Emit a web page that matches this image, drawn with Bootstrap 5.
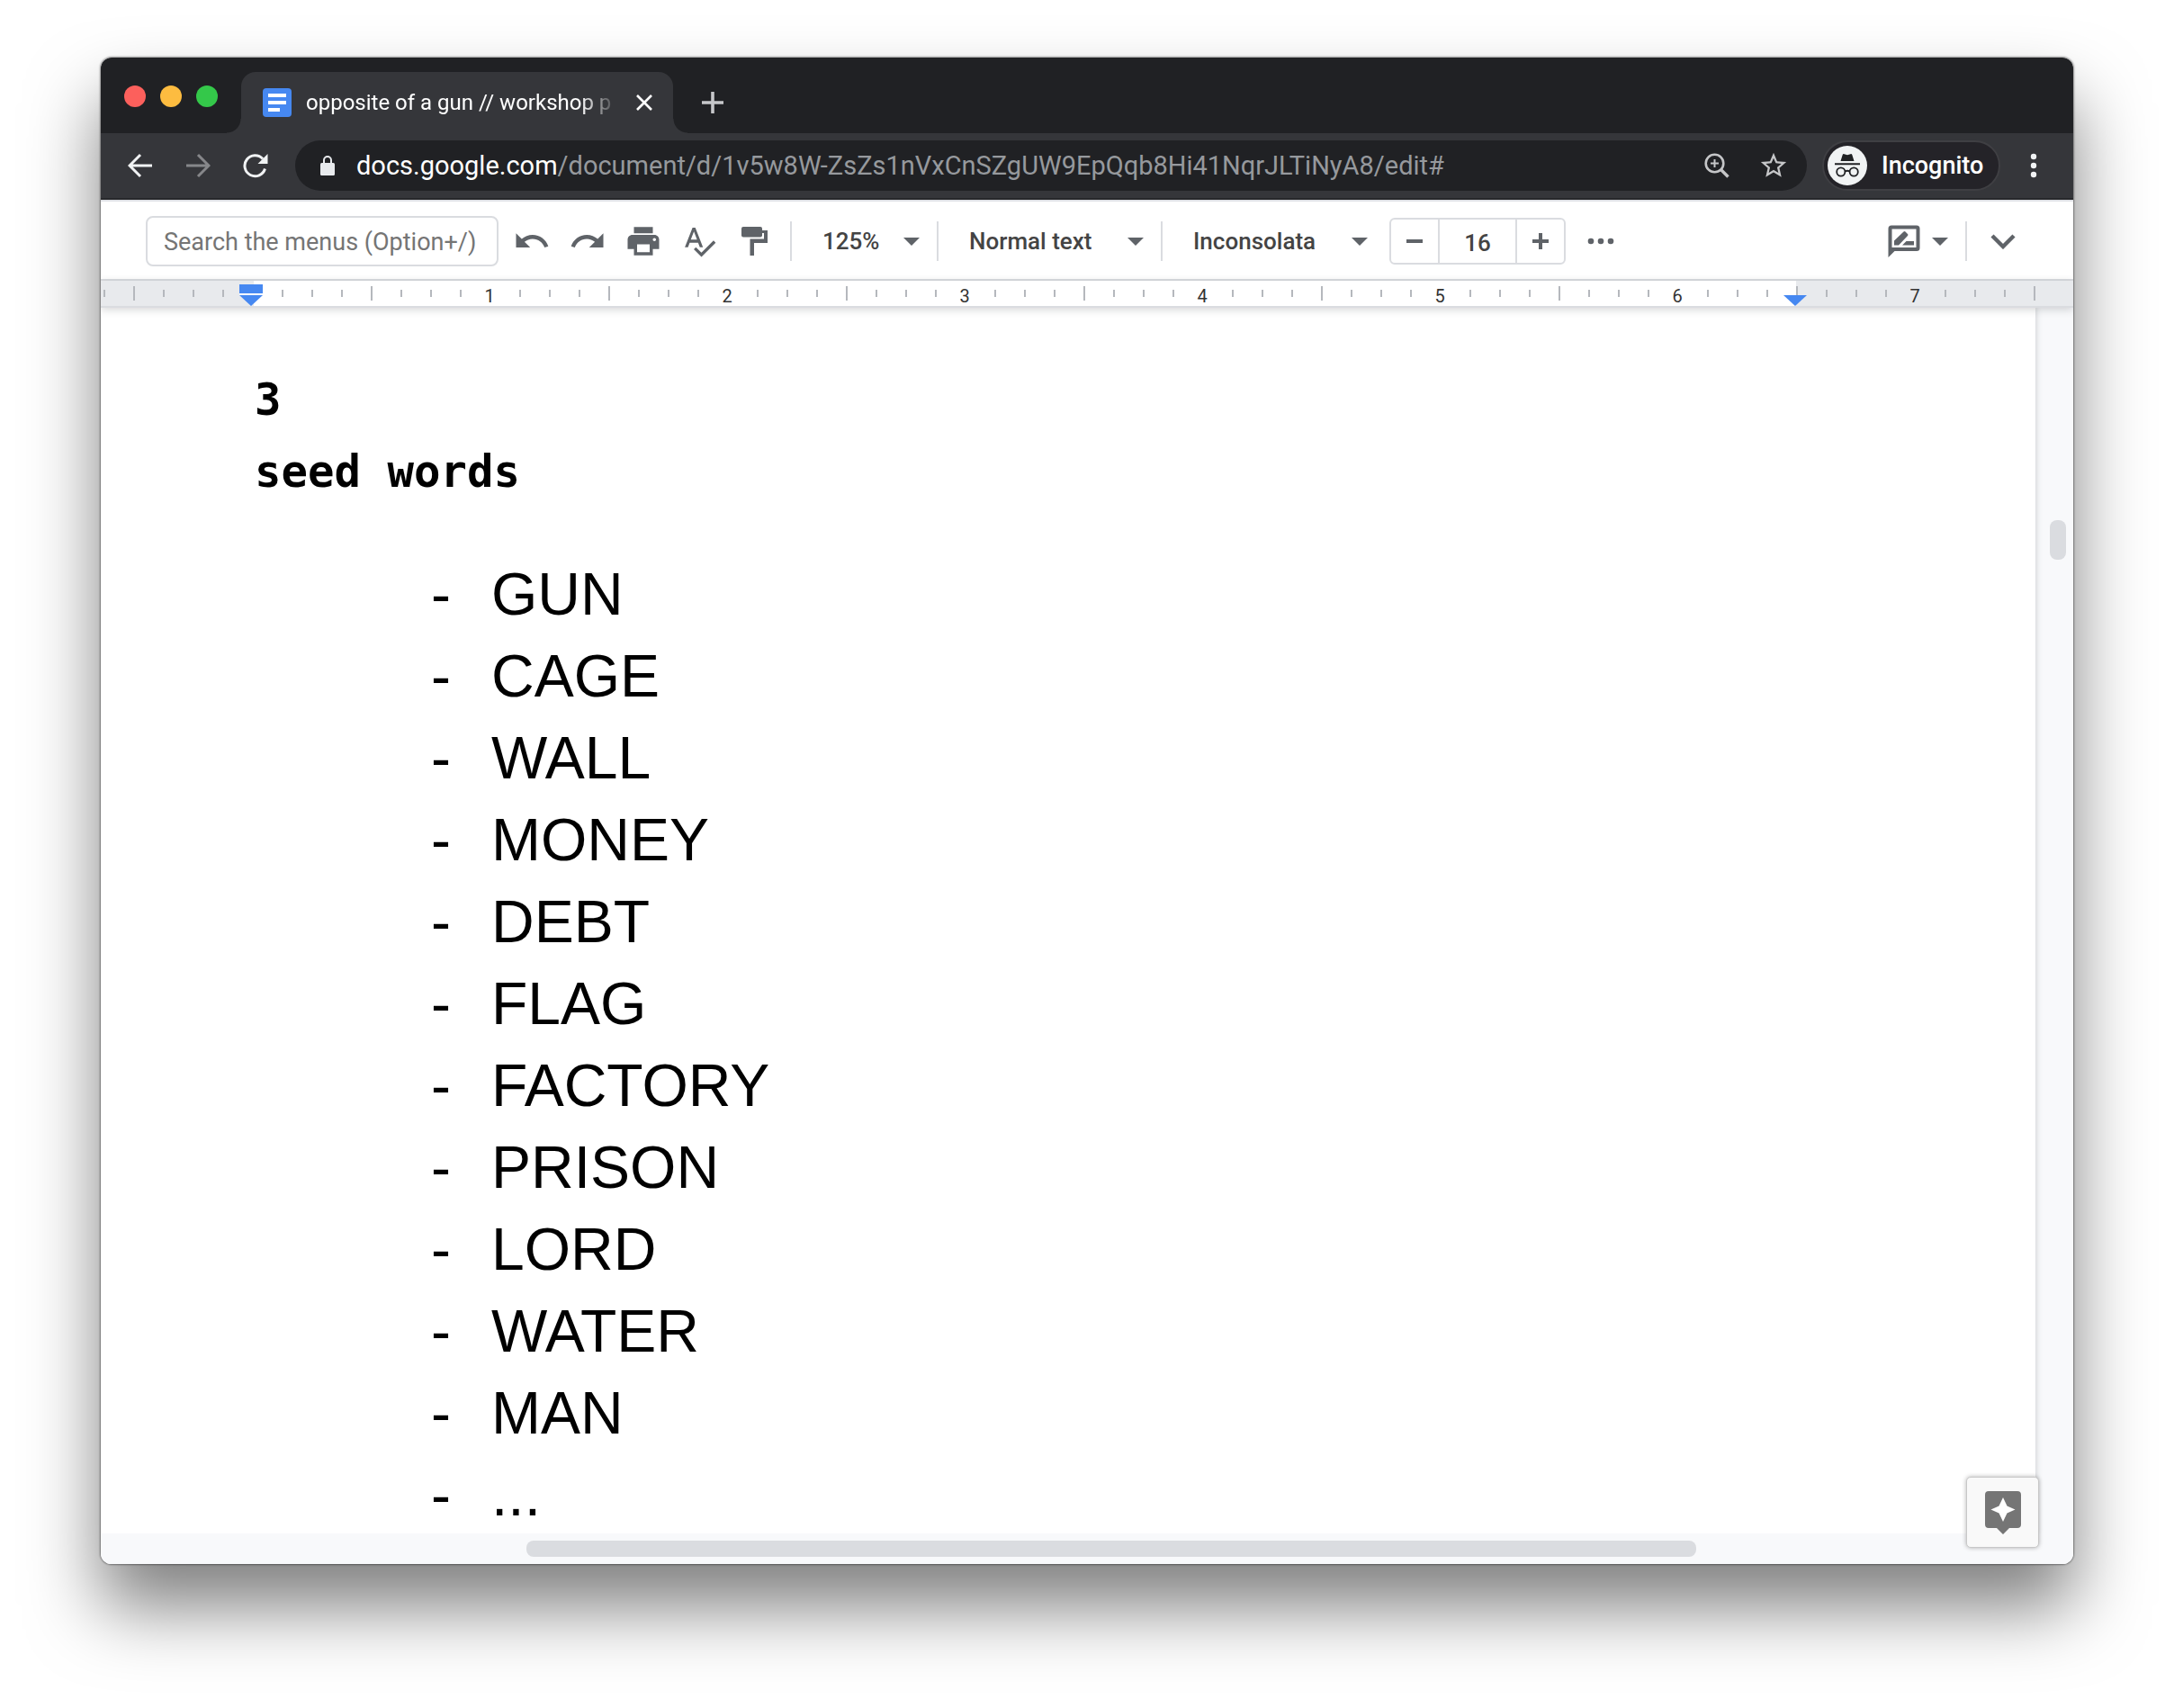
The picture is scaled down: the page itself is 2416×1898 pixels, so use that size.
<!DOCTYPE html>
<html lang="en">
<head>
<meta charset="utf-8">
<meta name="viewport" content="width=device-width, initial-scale=1">
<title>opposite of a gun // workshop p</title>
<link href="https://cdn.jsdelivr.net/npm/bootstrap@5.3.0/dist/css/bootstrap.min.css" rel="stylesheet">
<style>
body{background:#fff;padding:64px 112px 160px;font-family:Roboto,"Liberation Sans",sans-serif}
svg{display:block;flex:none}
button,.tab-title{font-family:inherit}
.icon-btn{background:none;border:0;padding:0;display:flex;align-items:center;justify-content:center;flex:none}
.browser{border-radius:12px;overflow:hidden;background:#f8f9fb}
.browser-shadow{border-radius:12px;box-shadow:0 48px 80px rgba(0,0,0,.5),0 0 2px 1px rgba(0,0,0,.4)}
/* tab strip */
.tabstrip{height:84px;background:#202124;padding-left:26px}
.lights{gap:16px;width:130px;height:24px;margin-top:31px}
.light{width:24px;height:24px;border-radius:50%;border:0;padding:0}
.light-r{background:#fc605c}.light-y{background:#fdbc40}.light-g{background:#34c84a}
.browser-tab{width:480px;height:68px;margin-top:16px;background:#35363a;border-radius:16px 16px 0 0;padding:0 22px 0 24px;position:relative;color:#fff}
.browser-tab::before,.browser-tab::after{content:"";position:absolute;bottom:0;width:16px;height:16px}
.browser-tab::before{left:-16px;background:radial-gradient(circle at 0 0,#202124 15px,#35363a 16px)}
.browser-tab::after{right:-16px;background:radial-gradient(circle at 100% 0,#202124 15px,#35363a 16px)}
.tab-title{font-size:24px;line-height:32px;flex:1 1 0;white-space:nowrap;margin-left:16px;margin-right:12px;-webkit-mask-image:linear-gradient(90deg,#000 86%,transparent 98%);mask-image:linear-gradient(90deg,#000 86%,transparent 98%)}
.new-tab{width:88px;height:68px;margin-top:16px}
/* address row */
.navrow{height:74px;background:#35363a;border-bottom:2px solid #27282b;padding:0 32px 0 12px}
.nav-btn{width:64px;height:56px}
.omnibox{height:56px;border-radius:28px;background:#202124;padding:0 20px 0 28px;margin-left:12px;flex:1 1 0;min-width:0}
.url{font-size:29px;line-height:40px;color:#96999d;white-space:nowrap;overflow:hidden;text-decoration:none;margin-left:24px}
.url b{font-weight:400;color:#fff}
.incog{height:56px;width:198px;border-radius:28px;background:#242328;border:2px solid #3f3f43;color:#fff;font-size:27px;padding:0 0 0 4px;gap:16px;margin-left:17px;margin-right:25px;font-weight:500;justify-content:flex-start}
/* docs toolbar */
.docbar{height:90px;background:#fff;border-top:2px solid #dfe1e5;border-bottom:2px solid #dadce0;padding:2px 47px 0 50px;color:#5f6368}
.menu-search{width:392px;height:56px;border:2px solid #dadce0;border-radius:8px;padding:2px 18px 0;font-size:27px;color:#3c4043;margin-right:6px}
.menu-search::placeholder{color:#757575;opacity:1}
.tool{width:62px;height:56px;color:#5f6368}
.vsep{width:2px;height:44px;background:#dadce0;flex:none}
.after-pick{margin-left:19px}
.pick{appearance:none;border:0;background:none;padding:0;font-size:26px;line-height:32px;font-weight:500;color:#444;margin-left:34px}
.pick-zoom{width:90px}.pick-wide{width:176px}
.sizer{height:52px;border:2px solid #dadce0;border-radius:6px;width:196px;margin-left:24px}
.sizer button{width:52px;color:#5f6368}
.size-field{border:solid #dadce0;border-width:0 2px;width:0;flex:1 1 0;text-align:center;font-size:26px;font-weight:500;color:#444;padding:4px 0 0}
.review{gap:13px;color:#5f6368}
.collapse-btn{margin-left:9px}
/* ruler */
.ruler{height:30px;border-bottom:2px solid #dadce0;background:linear-gradient(#e8eaed,#e8eaed) 0 0/170px 100% no-repeat,linear-gradient(#e8eaed,#e8eaed) 100% 0/308px 100% no-repeat,#fff;box-shadow:0 2px 10px rgba(60,64,67,.22);position:relative;z-index:2}
.ruler-scale{overflow:hidden;height:28px;flex:1 1 0;min-width:0}
.inch{width:264px;height:28px;flex:none;font-size:20px;line-height:34px;color:#333;background:linear-gradient(#b5b8bd,#b5b8bd) 0 6px/2px 16px no-repeat,linear-gradient(90deg,#b5b8bd 2px,transparent 2px) 0 10px/33px 8px repeat-x}
.inch span{background:#fff;padding:0 6px;height:28px}
.inch.outside span{background:#e8eaed}
.inch-part{width:36px;background:linear-gradient(90deg,#b5b8bd 2px,transparent 2px) 3px 10px/33px 8px repeat-x}
.inch-end{width:2px;height:16px;margin-top:6px;background:#b5b8bd}
.mark-left{position:absolute;left:154px;top:4px}
.mark-right{position:absolute;right:296px;top:16px}
/* document */
.workspace{background:#f8f9fb;flex:1 1 auto}
.sheet{background:#fff;box-shadow:0 0 6px 1px rgba(60,64,67,.22);padding:63px 171px 0;color:#000;clip-path:inset(0 -12px 0 0)}
.mono-line{font-family:"DejaVu Sans Mono","Liberation Mono",monospace;font-size:49px;line-height:80px;font-weight:700;margin:0}
.seeds{font-family:"Liberation Sans",Arial,sans-serif;font-size:66px;line-height:91px;list-style:none;margin:50px 0 -3px;padding:0 0 0 196px}
.seeds li{display:flex}
.seeds li::before{content:"-";width:67px;flex:none}
.vtrack{width:42px;flex:none;padding:236px 8px 0 16px}
.vthumb{height:44px;border-radius:8px;background:#dadce0}
.htrack{height:34px;padding-top:8px;background:#f8f9fb;flex:none}
.hthumb{height:18px;border-radius:8px;background:#dadce0;margin-left:21.6%;width:59.3%}
.explore{position:absolute;right:38px;bottom:18px;width:81px;height:79px;background:#f9f9f9;border:1px solid #c8c8c8;border-radius:5px;box-shadow:0 0 5px rgba(0,0,0,.3);z-index:3}
</style>
<script src="https://cdn.jsdelivr.net/npm/bootstrap@5.3.0/dist/js/bootstrap.bundle.min.js"></script>
</head>
<body class="d-flex flex-column min-vh-100">
<div class="browser-shadow d-flex flex-column flex-grow-1">
<div class="browser d-flex flex-column flex-grow-1 position-relative">
  <header>
    <div class="tabstrip d-flex">
      <div class="lights d-flex">
        <button class="light light-r" aria-label="Close window"></button>
        <button class="light light-y" aria-label="Minimize"></button>
        <button class="light light-g" aria-label="Zoom window"></button>
      </div>
      <div class="browser-tab d-flex align-items-center">
        <svg width="32" height="32" viewBox="0 0 32 32"><rect width="32" height="32" rx="4" fill="#4688f1"/><path d="M6 6h20v4H6zM6 14h20v4H6zM6 22h13v4H6z" fill="#fff"/></svg>
        <div class="tab-title">opposite of a gun // workshop p</div>
        <button class="icon-btn" aria-label="Close tab"><svg width="20" height="20" viewBox="0 0 20 20"><path d="M2 2l16 16M18 2L2 18" stroke="#fff" stroke-width="2.6"/></svg></button>
      </div>
      <button class="icon-btn new-tab" aria-label="New tab"><svg width="24" height="24" viewBox="0 0 24 24"><path d="M12 0v24M0 12h24" stroke="#c6c7ca" stroke-width="3.6"/></svg></button>
    </div>
    <nav class="navrow d-flex align-items-center" aria-label="Browser">
      <button class="icon-btn nav-btn" aria-label="Back"><svg width="28" height="28" viewBox="0 0 28 28"><path d="M27 14H3M14 2L2 14l12 12" fill="none" stroke="#f1f3f4" stroke-width="3"/></svg></button>
      <button class="icon-btn nav-btn" aria-label="Forward"><svg width="28" height="28" viewBox="0 0 28 28"><path d="M1 14h24M14 2l12 12-12 12" fill="none" stroke="#86878a" stroke-width="3"/></svg></button>
      <button class="icon-btn nav-btn" aria-label="Reload"><svg width="30" height="28" viewBox="0 0 30 28"><path d="M25.500 17.500A11.500 11.500 0 1 1 23 6.500" fill="none" stroke="#f1f3f4" stroke-width="3"/><path d="M28.500 1v11H17.500z" fill="#f1f3f4"/></svg></button>
      <div class="omnibox d-flex align-items-center">
        <svg width="16" height="22" viewBox="0 0 16 22"><path d="M4 9V5a4 4 0 0 1 8 0v4" fill="none" stroke="#e8eaed" stroke-width="2"/><rect y="8" width="16" height="14" rx="1.500" fill="#e8eaed"/></svg>
        <a class="url" href="#"><b>docs.google.com</b>/document/d/1v5w8W-ZsZs1nVxCnSZgUW9EpQqb8Hi41NqrJLTiNyA8/edit#</a>
        <button class="icon-btn ms-auto" aria-label="Zoom"><svg width="28" height="28" viewBox="0 0 28 28" fill="none" stroke="#c5c6c8"><circle cx="11.500" cy="11.500" r="9.800" stroke-width="2.600"/><path d="M18.500 18.500l8 8" stroke-width="3.400"/><path d="M11.500 7v9M7 11.500h9" stroke-width="2"/></svg></button>
        <button class="icon-btn ms-4 ps-2" aria-label="Bookmark"><svg width="34" height="34" viewBox="0 0 24 24" fill="#c5c6c8"><path d="M22 9.240l-7.190-.620L12 2 9.190 8.630 2 9.240l5.460 4.730L5.820 21 12 17.270 18.180 21l-1.630-7.030L22 9.240zM12 15.400l-3.760 2.270 1-4.280-3.320-2.880 4.380-.380L12 6.100l1.710 4.040 4.380.380-3.320 2.880 1 4.280L12 15.400z"/></svg></button>
      </div>
      <button class="icon-btn incog"><svg width="44" height="44" viewBox="0 0 44 44"><circle cx="22" cy="22" r="22" fill="#f1f3f4"/><path d="M14.500 17l2.200-7q.5-1.200 1.800-.8l3.500 1 3.500-1q1.300-.4 1.800.8l2.200 7z" fill="#202124"/><path d="M8 20.200h28" stroke="#202124" stroke-width="2"/><g fill="none" stroke="#202124" stroke-width="1.800"><circle cx="14.800" cy="29" r="4.600"/><circle cx="29.200" cy="29" r="4.600"/><path d="M19.400 28.500q2.600-1.500 5.200 0"/></g></svg>Incognito</button>
      <button class="icon-btn" aria-label="Menu"><svg width="24" height="28" viewBox="0 0 24 28" fill="#f1f3f4"><circle cx="12" cy="4" r="3.200"/><circle cx="12" cy="14" r="3.200"/><circle cx="12" cy="24" r="3.200"/></svg></button>
    </nav>
    <div class="docbar d-flex align-items-center">
      <input class="menu-search" type="text" placeholder="Search the menus (Option+/)" aria-label="Search the menus">
      <button class="icon-btn tool" aria-label="Undo"><svg width="42" height="42" viewBox="0 0 24 24" fill="currentColor"><path d="M12.500 8c-2.650 0-5.050.99-6.900 2.600L2 7v9h9l-3.620-3.620c1.390-1.160 3.160-1.880 5.120-1.880 3.540 0 6.550 2.310 7.600 5.500l2.370-.78C21.080 11.030 17.150 8 12.500 8z"/></svg></button>
      <button class="icon-btn tool" aria-label="Redo"><svg width="42" height="42" viewBox="0 0 24 24" fill="currentColor"><path d="M18.400 10.600C16.550 8.990 14.150 8 11.500 8c-4.650 0-8.580 3.030-9.960 7.220L3.900 16c1.050-3.190 4.050-5.500 7.600-5.500 1.950 0 3.730.72 5.120 1.880L13 16h9V7l-3.600 3.600z"/></svg></button>
      <button class="icon-btn tool" aria-label="Print"><svg width="42" height="42" viewBox="0 0 24 24" fill="currentColor"><path d="M19 8H5c-1.660 0-3 1.340-3 3v6h4v4h12v-4h4v-6c0-1.660-1.340-3-3-3zm-3 11H8v-5h8v5zm3-7c-.55 0-1-.45-1-1s.45-1 1-1 1 .45 1 1-.45 1-1 1zM18 3H6v4h12V3z"/></svg></button>
      <button class="icon-btn tool" aria-label="Spelling"><svg width="40" height="40" viewBox="0 0 24 24" fill="currentColor"><path d="M12.450 16h2.090L9.430 3H7.570L2.460 16h2.090l1.120-3h5.640l1.140 3zm-6.020-5L8.500 5.480 10.570 11H6.430zm15.160.59l-8.090 8.090L9.830 16l-1.410 1.410 5.090 5.090L23 13l-1.410-1.410z"/></svg></button>
      <button class="icon-btn tool" aria-label="Paint format"><svg width="30" height="32" viewBox="0 0 30 32" fill="currentColor"><rect width="23" height="11.500" rx="2"/><path d="M22 4h7v14H14v14H9.500V13.500H25V7h-3z"/></svg></button>
      <span class="vsep ms-2"></span>
      <select class="pick pick-zoom" aria-label="Zoom level"><option>125%</option></select>
      <svg width="18" height="9" viewBox="0 0 18 9" fill="currentColor"><path d="M0 0h18L9 9z"/></svg>
      <span class="vsep after-pick"></span>
      <select class="pick pick-wide" aria-label="Paragraph style"><option>Normal text</option></select>
      <svg width="18" height="9" viewBox="0 0 18 9" fill="currentColor"><path d="M0 0h18L9 9z"/></svg>
      <span class="vsep after-pick"></span>
      <select class="pick pick-wide" aria-label="Font"><option>Inconsolata</option></select>
      <svg width="18" height="9" viewBox="0 0 18 9" fill="currentColor"><path d="M0 0h18L9 9z"/></svg>
      <div class="sizer d-flex">
        <button class="icon-btn" aria-label="Decrease font size"><svg width="18" height="18" viewBox="0 0 18 18"><path d="M0 9h18" stroke="currentColor" stroke-width="4"/></svg></button>
        <input class="size-field" type="text" value="16" aria-label="Font size">
        <button class="icon-btn" aria-label="Increase font size"><svg width="18" height="18" viewBox="0 0 18 18"><path d="M0 9h18M9 0v18" stroke="currentColor" stroke-width="4"/></svg></button>
      </div>
      <button class="icon-btn tool ms-2" aria-label="More"><svg width="30" height="8" viewBox="0 0 30 8" fill="currentColor"><circle cx="4" cy="4" r="3.300"/><circle cx="15" cy="4" r="3.300"/><circle cx="26" cy="4" r="3.300"/></svg></button>
      <button class="icon-btn ms-auto review" aria-label="Editing mode"><svg width="36" height="36" viewBox="0 0 36 36"><path d="M.500 36V4q0-3.500 3.500-3.500h28q3.500 0 3.500 3.500v21.500q0 3.500-3.500 3.500H7.500z" fill="#5f6368"/><path d="M4.500 4.500h27v20.500h-27z" fill="#fff"/><path d="M7 22.500v-5L17.500 7.500q1-1 2 0l2.500 2.500q1 1 0 2L12 22.500zM16 22.500l4.500-4.500H29v4.500z" fill="#5f6368"/></svg><svg width="18" height="9" viewBox="0 0 18 9" fill="currentColor"><path d="M0 0h18L9 9z"/></svg></button>
      <span class="vsep after-pick"></span>
      <button class="icon-btn tool collapse-btn" aria-label="Hide the menus"><svg width="28" height="18" viewBox="0 0 28 18"><path d="M2 3l12 12L26 3" fill="none" stroke="currentColor" stroke-width="4.400"/></svg></button>
    </div>
    <div class="ruler d-flex">
      <div class="ruler-scale d-flex">
        <div class="inch-part flex-shrink-0"></div>
        <div class="inch"></div>
        <div class="inch d-flex justify-content-center"><span>1</span></div>
        <div class="inch d-flex justify-content-center"><span>2</span></div>
        <div class="inch d-flex justify-content-center"><span>3</span></div>
        <div class="inch d-flex justify-content-center"><span>4</span></div>
        <div class="inch d-flex justify-content-center"><span>5</span></div>
        <div class="inch d-flex justify-content-center"><span>6</span></div>
        <div class="inch outside d-flex justify-content-center"><span>7</span></div>
        <div class="inch-end"></div>
      </div>
      <svg class="mark-left" width="26" height="24" viewBox="0 0 26 24"><path d="M0 0h26v10H0zM0 12h26L13 24z" fill="#4688f1"/><path d="M0 10h26v2H0z" fill="#fff"/></svg>
      <svg class="mark-right" width="26" height="12" viewBox="0 0 26 12"><path d="M0 0h26L13 12z" fill="#4688f1"/></svg>
    </div>
  </header>
  <div class="workspace d-flex">
    <main class="sheet flex-grow-1">
      <p class="mono-line">3</p>
      <p class="mono-line">seed words</p>
      <ul class="seeds">
        <li>GUN</li><li>CAGE</li><li>WALL</li><li>MONEY</li><li>DEBT</li><li>FLAG</li><li>FACTORY</li><li>PRISON</li><li>LORD</li><li>WATER</li><li>MAN</li><li>...</li>
      </ul>
    </main>
    <div class="vtrack"><div class="vthumb"></div></div>
  </div>
  <div class="htrack"><div class="hthumb"></div></div>
  <button class="icon-btn explore" aria-label="Explore"><svg width="40" height="48" viewBox="0 0 40 48"><path d="M4 0h32q4 0 4 4v33q0 4-4 4h-9l-7 7-7-7H4q-4 0-4-4V4q0-4 4-4z" fill="#757575"/><path d="M20 7l4.500 9.500L33.500 20.500l-9 4L20 34l-4.500-9.500-9-4 9-4z" fill="#fff"/></svg></button>
</div>
</div>
</body>
</html>
